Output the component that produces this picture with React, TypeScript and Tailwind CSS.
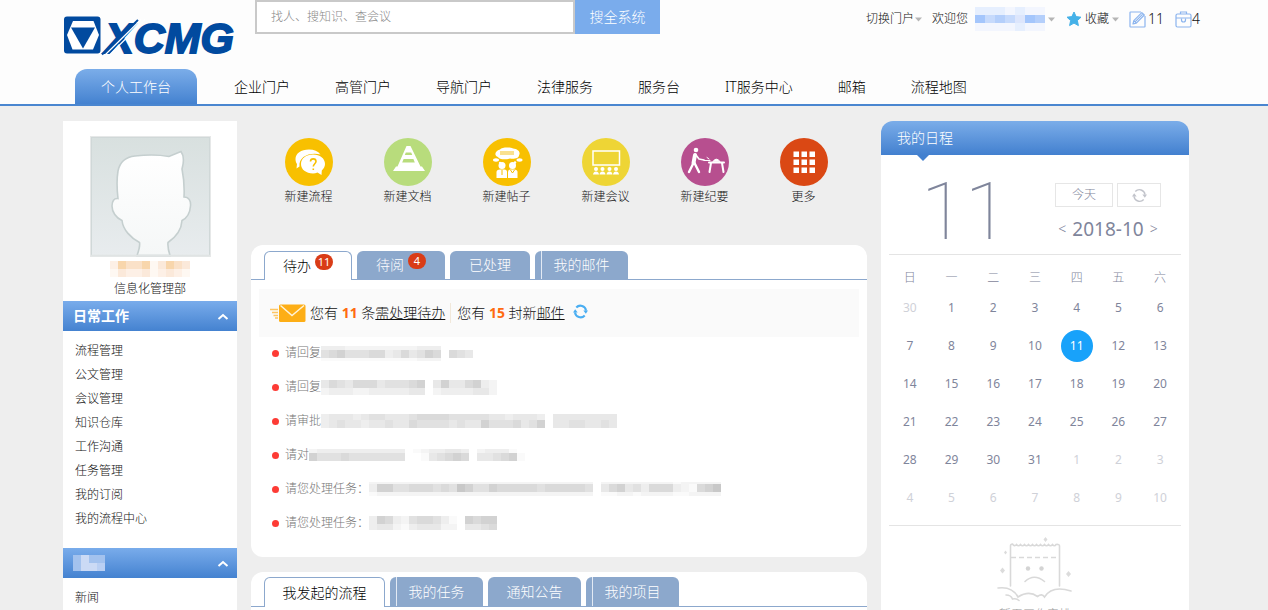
import React from "react";

const GRAY = ["none", "#fafafa", "#f4f4f4", "#eeeeee", "#e8e8e8", "#e1e1e1", "#dadada", "#d2d2d2", "#c8c8c8"];
const BLUE = ["none", "#f3f6fe", "#e6effe", "#dde6fc", "#c6dafc", "#b4cffb", "#a4c6fc"];
const ORANGE = ["none", "#fef8f2", "#fdf0e6", "#fbe9da", "#fae1c8", "#f8d6ac"];
const SKY = ["none", "#689fe5", "#8cb4ea", "#a3c2ee", "#b9cff3", "#cbdaf5"];

type Band = [height: number, levels: string];

function Mosaic({ bands, palette = GRAY, cell = 8 }: { bands: Band[]; palette?: string[]; cell?: number }) {
  const width = Math.max(...bands.map((b) => b[1].length)) * cell;
  const height = bands.reduce((sum, b) => sum + b[0], 0);
  let top = 0;
  return (
    <svg width={width} height={height} viewBox={`0 0 ${width} ${height}`} className="shrink-0" shapeRendering="crispEdges" aria-hidden="true">
      {bands.map(([h, levels], row) => {
        const y = top;
        top += h;
        return levels.split("").map((level, i) => (
          <rect key={`${row}-${i}`} x={i * cell} y={y} width={cell} height={h} fill={palette[Number(level)]} />
        ));
      })}
    </svg>
  );
}

function Logo() {
  return (
    <svg width="184" height="52" viewBox="0 0 184 52" role="img" aria-label="XCMG">
      <rect x="1" y="1.500" width="36.500" height="37" rx="3" fill="#014a9f" />
      <path d="M10 6H30.500L36 20 30 34.500H9.500L4 20Z" fill="#fff" />
      <path d="M8 12.500H32L20 33.500Z" fill="#014a9f" />
      <text x="42" y="38" fontFamily="Liberation Sans, Arial, sans-serif" fontWeight="700" fontStyle="italic" fontSize="43" fill="#014a9f" stroke="#014a9f" strokeWidth="1.800">
        XCMG
      </text>
      <path d="M39 39.500 75 5" stroke="#014a9f" strokeWidth="2" />
      <path d="M42 40 78 4.500M46.500 40 82 4.500" stroke="#fff" strokeWidth="1.200" />
    </svg>
  );
}

function Caret() {
  return (
    <svg width="7" height="5" viewBox="0 0 7 5" aria-hidden="true">
      <path d="M0 0.500H7L3.500 4.500Z" fill="#b5b5b5" />
    </svg>
  );
}

function StarIcon() {
  return (
    <svg width="16" height="16" viewBox="0 0 16 16" aria-hidden="true">
      <path d="M8 1 10.100 5.600 15 6.200 11.400 9.600 12.400 14.600 8 12.100 3.600 14.600 4.600 9.600 1 6.200 5.900 5.600Z" fill="#45b1e8" stroke="#45b1e8" strokeLinejoin="round" />
    </svg>
  );
}

function EditIcon() {
  return (
    <svg width="17" height="17" viewBox="0 0 17 17" fill="none" stroke="#8bb4ee" strokeWidth="1.200" strokeLinejoin="round" aria-hidden="true">
      <path d="M12 1H1.500Q1 1 1 1.500V15.500Q1 16 1.500 16H15.500Q16 16 16 15.500V5" />
      <path d="M4 13 4.800 9.600 12.800 1.600 15.300 4 7.300 12.200ZM4.800 9.600 7.300 12.200M6 10.900 13.500 3.400" />
    </svg>
  );
}

function BriefcaseIcon() {
  return (
    <svg width="17" height="17" viewBox="0 0 17 17" fill="none" stroke="#8bb4ee" strokeWidth="1.200" aria-hidden="true">
      <rect x="1" y="3" width="15" height="13" rx="1.500" />
      <path d="M5.500 3V1H11.500V3M1 7H16" />
      <path d="M6.500 7.500V9A2 2 0 0 0 10.500 9V7.500" />
    </svg>
  );
}

function Avatar() {
  return (
    <svg width="121" height="121" viewBox="0 0 121 121" role="img" aria-label="头像">
      <defs>
        <linearGradient id="avatarBack" x1="0" y1="0" x2="0" y2="1">
          <stop offset="0" stopColor="#d8e0df" />
          <stop offset="1" stopColor="#e8ecee" />
        </linearGradient>
        <linearGradient id="avatarFace" x1="0" y1="0" x2="0" y2="1">
          <stop offset="0" stopColor="#ffffff" />
          <stop offset="1" stopColor="#f5f7f7" />
        </linearGradient>
      </defs>
      <rect width="121" height="121" fill="#e6e8e8" />
      <rect x="1.500" y="1.500" width="118" height="118" fill="url(#avatarBack)" stroke="#d0d8d8" />
      <path
        d="M47 119.500C49 114 50 109 49.500 106.500C41 102 33 94 32 84.500C26 82 22 76 22 70C22 65 24 62 28 62.500C27 54 26.500 44 28 35C30 25 36 21 45 20C58 18.500 68 18.500 79 20.500L91 15.500C93.500 19 94 26 92 33C94 43 94.500 52 94 61C99 61 101 65 100.500 70C100 77 97 82 92 84.500C91.500 94 86 101 78 106.500C77.500 111 78.500 115 80 119.500Z"
        fill="url(#avatarFace)"
        stroke="#c5cfcf"
        strokeWidth="1.600"
      />
      <path d="M1 119.500H120" stroke="#e0e4e4" strokeWidth="1.500" />
    </svg>
  );
}

function ChatArt() {
  return (
    <g>
      <path d="M24 11.500C16 11.500 10.500 15.500 10.500 21C10.500 23 11 24.600 12 26L11.500 30.500 14.500 28.500C13.500 19 24 14 35.500 16.500C33 13 29 11.500 24 11.500Z" fill="#fff" />
      <path d="M28 16.500C35 16.500 40 20.500 40 26C40 28.500 38.800 30.800 36.800 32.400L36.500 37 32.500 34.600C31 35.200 29.500 35.400 28 35.400C21 35.400 16 31.500 16 26C16 20.500 21 16.500 28 16.500Z" fill="#fff" />
      <path d="M25.500 23.500C25.500 20 31 20 31 23.500C31 25.500 28.300 26 28.300 28.500M28.300 30.500V32" fill="none" stroke="#f8c000" strokeWidth="1.600" />
    </g>
  );
}

function DocArt() {
  return (
    <path fill="#fff" fillRule="evenodd" d="M22.500 8H26.500L36.500 28.500H38L41 33H9L12 28.500H13.500ZM21.800 14.500 20.800 17H28.200L27.200 14.500ZM19.600 21 18.200 24.500H30.800L29.400 21Z" />
  );
}

function PostArt() {
  return (
    <g fill="#fff">
      <path d="M17 11.500C19 9 27 9 30 10.500C35 11 38 14 36 17.500C36 20 31 21.500 27 20.500C22 22 16 21.500 15 19C11 18 11.500 13 17 11.500Z" />
      <rect x="17" y="13" width="14" height="4" fill="#fae18f" />
      <ellipse cx="13" cy="22" rx="3" ry="1.700" />
      <ellipse cx="36.500" cy="22" rx="3" ry="1.700" />
      <circle cx="17" cy="25" r="1.200" />
      <circle cx="32" cy="24.500" r="1.200" />
      <circle cx="19" cy="27.500" r="3.500" />
      <circle cx="29.500" cy="27.500" r="3.500" />
      <path d="M13.500 40V34Q13.500 31.500 17 31.500H21.500Q24 31.500 24 34V40Z" />
      <path d="M25 40V34Q25 31.500 27.500 31.500H31Q34.500 31.500 34.500 34V40Z" />
      <path d="M19 32V37M27.500 32 29.500 35 31.500 32" stroke="#f8c000" strokeWidth="1" fill="none" />
    </g>
  );
}

function MeetingArt() {
  return (
    <g fill="#fff">
      <rect x="11" y="13" width="26.500" height="14" fill="none" stroke="#fff" strokeWidth="1.500" />
      {[14, 20.5, 27.5, 34].map((x) => (
        <g key={x}>
          <circle cx={x} cy="31" r="2" />
          <path d={`M${x - 3} 36.500Q${x - 2.5} 33.500 ${x} 33.500Q${x + 2.5} 33.500 ${x + 3} 36.500Z`} />
        </g>
      ))}
    </g>
  );
}

function MinutesArt() {
  return (
    <g fill="none" stroke="#fff" strokeLinecap="round" strokeLinejoin="round">
      <circle cx="15" cy="12" r="2.300" fill="#fff" stroke="none" />
      <path d="M14 17 12.500 25" strokeWidth="4" />
      <path d="M12.500 25 8 34M13.500 25 18 34" strokeWidth="2.400" />
      <path d="M15 17 18 21 23 22" strokeWidth="1.600" />
      <path d="M28 24.500H43M30 25 28.500 34M41 25 42.500 34" strokeWidth="2" />
      <path d="M23 22.500H29M26 19.500 28 21" strokeWidth="1" />
      <path d="M32 23.500Q35 18.500 39 23.500Z" fill="#fff" strokeWidth="1" />
    </g>
  );
}

function MoreArt() {
  return (
    <g fill="#fff">
      {[13.5, 21.5, 29.5].map((y) => [13.5, 21.5, 29.5].map((x) => <rect key={`${x}-${y}`} x={x} y={y} width="5.500" height="5.500" />))}
    </g>
  );
}

const shortcuts = [
  { label: "新建流程", color: "#f8c000", Art: ChatArt },
  { label: "新建文档", color: "#b8dc7c", Art: DocArt },
  { label: "新建帖子", color: "#f8c000", Art: PostArt },
  { label: "新建会议", color: "#eed535", Art: MeetingArt },
  { label: "新建纪要", color: "#b74f8f", Art: MinutesArt },
  { label: "更多", color: "#da4814", Art: MoreArt },
];

function MailIcon() {
  return (
    <svg width="36" height="19" viewBox="0 0 36 19" aria-hidden="true">
      <path d="M0 5.500H8M2 8.500H8M3.500 11.500H8M5 14H8" stroke="#fdc562" strokeWidth="1.300" />
      <rect x="9" y="0.500" width="26.500" height="17.500" rx="1.500" fill="#fdae16" />
      <path d="M10.500 1.500 22 11.500 34 1.500" fill="none" stroke="#fff3d8" strokeWidth="1.500" />
    </svg>
  );
}

function SyncIcon({ color, size, thickness }: { color: string; size: number; thickness: number }) {
  return (
    <svg width={size} height={size} viewBox="0 0 16 16" aria-hidden="true">
      <path d="M3.500 3.800A6 6 0 0 1 13.900 7M12.500 12.200A6 6 0 0 1 2.100 9" fill="none" stroke={color} strokeWidth={thickness} />
      <path d="M11 7H16L13.700 10.500ZM0 9H5L2.300 5.500Z" fill={color} />
    </svg>
  );
}

function EmptyIcon() {
  return (
    <svg width="76" height="66" viewBox="0 0 76 66" fill="none" stroke="#d9d9d9" strokeWidth="1.600" strokeLinecap="round" aria-hidden="true">
      <path d="M13.500 49V9Q13.500 7 15.500 7Q17.500 10 19.500 7.500Q21.500 10 23.500 7.500Q25.500 10 27.500 7.500Q29.500 10 31.500 7.500Q33.500 10 35.500 7.500Q37.500 10 39.500 7.500Q41.500 10 43.500 7.500Q45.500 10 47.500 7.500Q49.500 10 51.500 7.500Q53.500 10 55.500 7.500Q57.500 10 59 7.500Q62.500 7 62.500 9V49" />
      <path d="M14 20.500H62" strokeDasharray="5 3" strokeLinecap="butt" />
      <circle cx="31" cy="31.500" r="2.200" fill="#d4d4d4" stroke="none" />
      <circle cx="44.500" cy="31.500" r="2.200" fill="#d4d4d4" stroke="none" />
      <path d="M28 44.500Q37 36 47.500 44.500" />
      <path d="M1 51Q15 49 21 60Q32 53 40.500 59.500Q45 56 47.500 60Q55 48 74 54M9 58Q14 58 15.500 62Q19 61 22 63.500" />
      <path fill="#dcdcdc" stroke="none" d="M48.500 0 50.500 2.500 48.500 5 46.500 2.500ZM5.500 30.500 8 33.500 5.500 36.500 3 33.500ZM71.500 34 74 37 71.500 40 69 37ZM8.500 13.500 10 15.500 8.500 17.500 7 15.500Z" />
    </svg>
  );
}

const portals = ["企业门户", "高管门户", "导航门户", "法律服务", "服务台", "IT服务中心", "邮箱", "流程地图"];
const dailyWork = ["流程管理", "公文管理", "会议管理", "知识仓库", "工作沟通", "任务管理", "我的订阅", "我的流程中心"];

const todos: { text: string; bands: Band[] }[] = [
  { text: "请回复", bands: [[4, "3332222222223330"], [8, "5675556634645760654"], [3, "1111111111112220"]] },
  { text: "请回复", bands: [[8, "4654666455567047446732"], [7, "2333223333344023333442"]] },
  { text: "请审批", bands: [[6, "3444345544456666555554434443044444444"], [8, "3454434454465555454475556457044554454"]] },
  { text: "请对", bands: [[4, "233333333333012334430233310"], [8, "755565555555001456760445671"]] },
  {
    text: "请您处理任务：",
    bands: [
      [2, "22222222222222222222222222220222222222122222"],
      [8, "37755666565875576666656666650467453666321678"],
      [4, "12222222222222222222222222220112212222112222"],
    ],
  },
  { text: "请您处理任务：", bands: [[8, "3763256653107677"], [6, "3442134442204456"]] },
];

const weeks = [
  [30, 1, 2, 3, 4, 5, 6],
  [7, 8, 9, 10, 11, 12, 13],
  [14, 15, 16, 17, 18, 19, 20],
  [21, 22, 23, 24, 25, 26, 27],
  [28, 29, 30, 31, 1, 2, 3],
  [4, 5, 6, 7, 8, 9, 10],
];

function inMonth(week: number, day: number) {
  return !((week === 0 && day > 20) || (week > 3 && day < 20));
}

function SideBar({ children }: { children: React.ReactNode }) {
  return (
    <button type="button" className="flex h-[30px] w-full items-center justify-between bg-linear-to-b from-[#79aceb] to-[#4482d0] pr-2 pl-[10px] text-sm font-bold text-white">
      {children}
      <svg width="12" height="7" viewBox="0 0 12 7" fill="none" stroke="#fff" strokeWidth="2" aria-hidden="true">
        <path d="M1.500 6 6 2 10.500 6" />
      </svg>
    </button>
  );
}

function Tab({ label, width, active, badge, marker }: { label: string; width: string; active?: boolean; badge?: number; marker?: boolean }) {
  const look = active ? "-mb-px border border-b-0 border-[#8ca8cd] bg-white text-black" : "bg-[#8ca8cc] text-white";
  return (
    <button type="button" role="tab" aria-selected={!!active} className={`relative flex items-center justify-center rounded-t-md text-sm ${width} ${look}`}>
      {marker && <span className="absolute inset-y-0 left-1.5 w-px bg-[#e3eaf4]" />}
      <span>{label}</span>
      {badge !== undefined && <span className="mb-2 ml-1 flex h-4 w-[18px] items-center justify-center rounded-full bg-[#d93c17] text-[11px] font-normal text-white">{badge}</span>}
    </button>
  );
}

export default function App() {
  return (
    <div className="h-screen overflow-hidden bg-[#eeeeee] font-['Noto_Sans','Noto_Sans_CJK_SC',sans-serif] text-xs font-light text-[#111111]">
      <header className="border-b-2 border-[#4a86d0] bg-[#fdfdfd]">
        <div className="mx-auto max-w-[1142px]">
          <div className="flex h-[69px] items-start">
            <a href="#home" className="w-48 shrink-0 pt-[15px]">
              <Logo />
            </a>
            <form className="flex h-[34px]">
              <input type="search" aria-label="搜索" placeholder="找人、搜知识、查会议" className="w-80 border-2 border-[#c9c9c9] bg-white px-[14px] text-xs outline-none placeholder:text-[#888888]" />
              <button type="button" className="w-[85px] bg-[#7aacec] text-sm text-white">
                搜全系统
              </button>
            </form>
            <div className="ml-auto flex h-[38px] items-center pr-[5px]">
              <button type="button" className="mr-[10px] flex items-center gap-[1px]">
                切换门户
                <Caret />
              </button>
              <button type="button" className="mr-[11px] flex items-center">
                <span className="mr-[7px]">欢迎您</span>
                <Mosaic cell={10} palette={BLUE} bands={[[8, "2221211"], [8, "6454365"], [8, "1111211"]]} />
                <span className="ml-[3px]">
                  <Caret />
                </span>
              </button>
              <button type="button" className="mr-[10px] flex items-center gap-[3px]">
                <StarIcon />
                收藏
                <Caret />
              </button>
              <a href="#drafts" className="mr-[11px] flex items-center gap-[2px] text-sm">
                <EditIcon />
                11
              </a>
              <a href="#work" className="flex items-center text-sm">
                <BriefcaseIcon />4
              </a>
            </div>
          </div>
          <nav className="flex h-[35px] gap-px pl-3 text-sm text-black">
            <a href="#mine" className="mr-[14px] flex items-center rounded-t-xl bg-linear-to-b from-[#7bade9] to-[#4482d0] px-[26px] text-white">
              个人工作台
            </a>
            {portals.map((name) => (
              <a key={name} href={`#${name}`} className="flex items-center px-[22px]">
                {name}
              </a>
            ))}
          </nav>
        </div>
      </header>

      <main className="mx-auto flex max-w-[1142px] items-start gap-[14px] pt-[15px] pr-4">
        <aside className="w-[174px] shrink-0 bg-white">
          <div className="flex flex-col items-center pt-[15px]">
            <Avatar />
            <div className="mt-1">
              <Mosaic palette={ORANGE} bands={[[8, "2544513543"], [8, "1322312321"]]} />
            </div>
            <p className="leading-6">信息化管理部</p>
          </div>
          <SideBar>日常工作</SideBar>
          <ul className="pt-2 pb-[17px] pl-3 leading-6">
            {dailyWork.map((item) => (
              <li key={item}>
                <a href={`#${item}`}>{item}</a>
              </li>
            ))}
          </ul>
          <SideBar>
            <Mosaic palette={SKY} bands={[[8, "3533"], [8, "3554"]]} />
          </SideBar>
          <ul className="pt-2 pb-4 pl-3 leading-6">
            <li>
              <a href="#news">新闻</a>
            </li>
          </ul>
        </aside>

        <div className="min-w-0 flex-1">
          <div className="flex pt-[17px] pb-[37px] pl-2">
            {shortcuts.map(({ label, color, Art }) => (
              <a key={label} href={`#${label}`} className="flex w-[99px] flex-col items-center leading-[22px]">
                <svg width="48" height="48" viewBox="0 0 48 48" aria-hidden="true">
                  <circle cx="24" cy="24" r="24" fill={color} />
                  <Art />
                </svg>
                {label}
              </a>
            ))}
          </div>

          <section className="rounded-xl bg-white pt-1.5 pb-6">
            <div role="tablist" className="flex h-[29px] gap-[5px] border-b border-[#8ca8cd] pl-[13px]">
              <Tab label="待办" width="w-[88px]" active badge={11} />
              <Tab label="待阅" width="w-[88px]" badge={4} />
              <Tab label="已处理" width="w-[80px]" />
              <Tab label="我的邮件" width="w-[93px]" marker />
            </div>
            <div className="mx-2 mt-[9px] flex h-12 items-center bg-[#fafafa] pl-[11px] text-sm">
              <MailIcon />
              <p className="ml-1 border-r border-[#f1e8da] pr-[5px]">
                您有 <b className="font-bold text-[#ff6a10]">11</b> 条
                <a href="#todo" className="underline">
                  需处理待办
                </a>
              </p>
              <p className="mr-2 ml-1.5">
                您有 <b className="font-bold text-[#ff6a10]">15</b> 封新
                <a href="#mail" className="underline">
                  邮件
                </a>
              </p>
              <button type="button" aria-label="刷新" className="pb-1">
                <SyncIcon color="#4aaef2" size={15} thickness={2.2} />
              </button>
            </div>
            <ul className="flex flex-col gap-[14px] pt-1.5 pl-[21px] text-[#777777]">
              {todos.map((todo, i) => (
                <li key={i} className="flex h-5 items-center">
                  <span className="mr-1.5 size-[7px] rounded-full bg-[#fd3b35]" />
                  <span>{todo.text}</span>
                  <Mosaic bands={todo.bands} />
                </li>
              ))}
            </ul>
          </section>

          <section className="mt-[15px] rounded-xl bg-white pt-[5px] pb-20">
            <div role="tablist" className="flex h-[30px] gap-[5px] border-b border-[#8ca8cd] pl-[13px]">
              <Tab label="我发起的流程" width="w-[121px]" active />
              <Tab label="我的任务" width="w-[93px]" marker />
              <Tab label="通知公告" width="w-[93px]" />
              <Tab label="我的项目" width="w-[93px]" marker />
            </div>
          </section>
        </div>

        <section className="w-[308px] shrink-0 bg-white text-[#7f859b]">
          <div className="-mt-px bg-[#eeeeee] pt-px">
            <h2 className="relative flex h-[34px] items-center rounded-t-xl bg-linear-to-b from-[#7bade9] to-[#4280cf] pl-4 text-sm text-white">
              我的日程
              <svg width="12" height="6" viewBox="0 0 12 6" className="absolute top-full left-9" aria-hidden="true">
                <path d="M0 0H12L6 6Z" fill="#4280cf" />
              </svg>
            </h2>
          </div>
          <div className="px-2">
            <div className="flex h-[100px] items-start justify-between border-b border-[#e4e4e4] pr-5 pl-8">
              <p className="pt-[17px] font-['Roboto',sans-serif] text-[80px] leading-[80px] font-thin">11</p>
              <div className="flex flex-col items-center gap-2 pt-7">
                <div className="flex h-6 gap-1">
                  <button type="button" className="w-[58px] border border-[#e6e6e6]">
                    今天
                  </button>
                  <button type="button" aria-label="刷新日程" className="flex w-11 items-center justify-center border border-[#e6e6e6]">
                    <SyncIcon color="#c2c4cb" size={15} thickness={1.5} />
                  </button>
                </div>
                <div className="flex items-center gap-1.5 leading-7">
                  <button type="button" aria-label="上个月" className="text-sm">
                    &lt;
                  </button>
                  <span className="text-[19px] font-normal">2018-10</span>
                  <button type="button" aria-label="下个月" className="text-sm">
                    &gt;
                  </button>
                </div>
              </div>
            </div>
            <table className="mt-3 w-full table-fixed text-center">
              <thead>
                <tr className="h-[22px]">
                  {["日", "一", "二", "三", "四", "五", "六"].map((d) => (
                    <th key={d} className="font-light">
                      {d}
                    </th>
                  ))}
                </tr>
              </thead>
              <tbody className="font-normal">
                {weeks.map((week, w) => (
                  <tr key={w} className="h-[38px]">
                    {week.map((day, d) => (
                      <td key={d} className={inMonth(w, day) ? "" : "text-[#cfd1d8]"}>
                        {w === 1 && day === 11 ? <span className="mx-auto flex size-8 items-center justify-center rounded-full bg-[#18a2fa] text-white">{day}</span> : day}
                      </td>
                    ))}
                  </tr>
                ))}
              </tbody>
            </table>
            <div className="mt-2 flex flex-col items-center gap-1 border-t border-[#e4e4e4] pt-[11px] pb-8 text-[#999999]">
              <EmptyIcon />
              <p>暂无工作安排</p>
            </div>
          </div>
        </section>
      </main>
    </div>
  );
}
